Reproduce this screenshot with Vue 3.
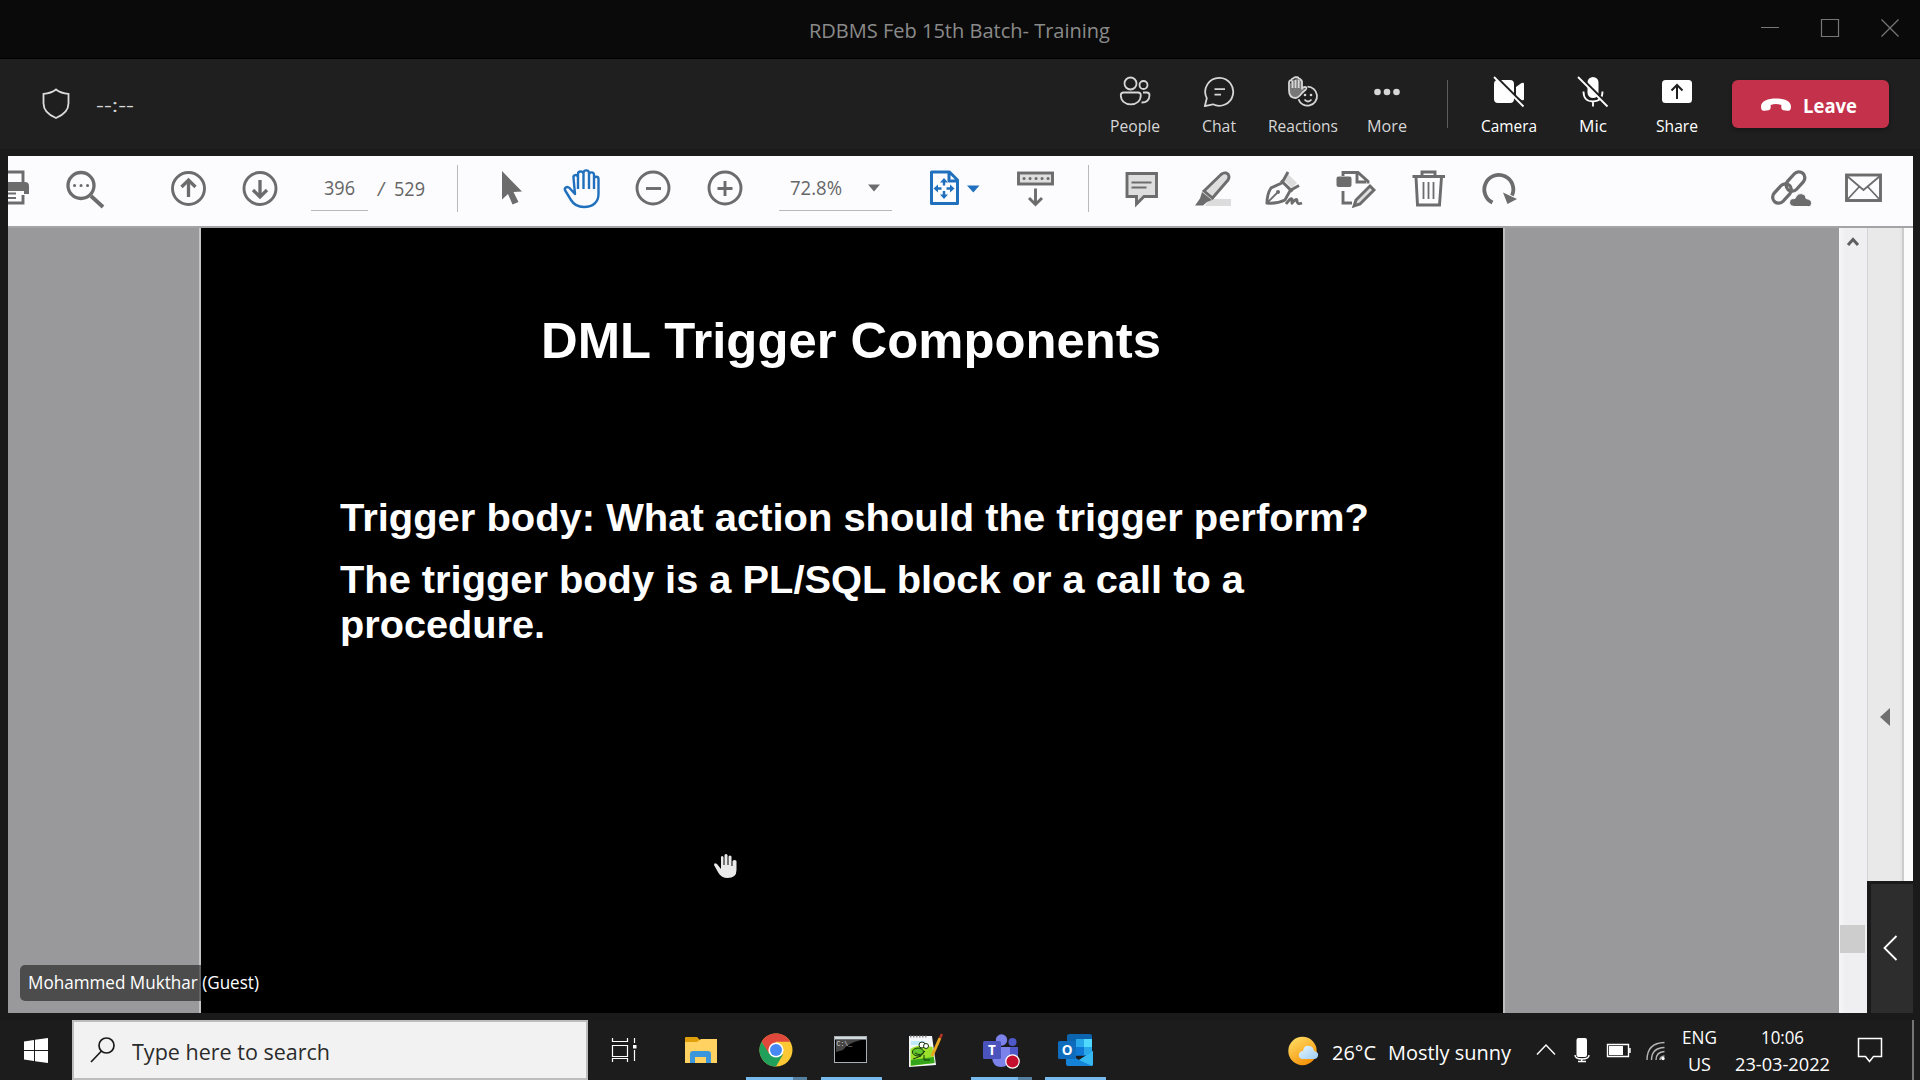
<script setup>
// Squeezes a label horizontally so that it occupies exactly the given width.
const vFit = {
  mounted(el, { value }) {
    const natural = el.getBoundingClientRect().width
    el.style.transform = `scaleX(${value / natural})`
    el.style.marginRight = `${value - natural}px`
  },
}

const callTools = [
  { id: 'people', label: 'People', width: 50 },
  { id: 'chat', label: 'Chat', width: 34 },
  { id: 'reactions', label: 'Reactions', width: 70 },
  { id: 'more', label: 'More', width: 40 },
]
const deviceTools = [
  { id: 'camera', label: 'Camera', width: 56 },
  { id: 'mic', label: 'Mic', width: 28 },
  { id: 'share', label: 'Share', width: 42 },
]
</script>

<template>
  <div class="desktop">
    <header class="titlebar">
      <span class="title"><span v-fit="301" class="fit">RDBMS Feb 15th Batch- Training</span></span>
      <svg class="window-controls" width="180" height="58" viewBox="1740 0 180 58">
        <path d="M1761 27.500h18M1821.500 19.500h17v17h-17zM1881.500 19.500l17 17M1898.500 19.500l-17 17" />
      </svg>
    </header>

    <section class="callbar">
      <svg class="shield" width="30" height="34" viewBox="0 0 30 34">
        <path d="M15 2.500c3.500 2.800 7.500 4 12.500 4.300v9.500c0 7-4.500 11.500-12.500 14.700C7 27.800 2.500 23.300 2.500 16.300V6.800C7.500 6.500 11.500 5.300 15 2.500z" />
      </svg>
      <span class="timer"><span v-fit="38" class="fit">--:--</span></span>

      <nav class="tools">
        <div v-for="t in callTools" :key="t.id" class="tool">
          <svg width="32" height="32" viewBox="0 0 32 32">
            <g v-if="t.id === 'people'" class="ln">
              <circle cx="11.500" cy="7.500" r="6" />
              <circle cx="24.500" cy="9" r="4" />
              <path d="M4.500 16.500h14.500q2.800 0 2.800 2.800c0 5.500-4 9-10 9s-10-3.500-10-9q0-2.800 2.700-2.800zM24 16.500h3.800q2.700 0 2.700 2.800c0 4.700-3 7.400-8 7.200" />
            </g>
            <g v-else-if="t.id === 'chat'" class="ln">
              <path d="M16.500 1.800a14 14 0 1 1-6.600 26.500L1.800 30.200l2-8A14 14 0 0 1 16.500 1.800zM11.500 13.200h10.500M11.500 18.700h6.500" />
            </g>
            <g v-else-if="t.id === 'reactions'">
              <path class="hand-fill" d="M3 7V16q0 5 4 6l5-2 7-6q-1-3-4 0V5q-1-2-2.500 0-.5-3-2.500-3T7.500 4Q4 3 4 7z" />
              <path class="ln" d="M2 6.500V14q0 8 6.500 8c3 0 5-3 7-5.500l3-2.700q2-2.300-.5-2.800-1.500 0-3 1.800V5.500q-.3-1.700-1.800-1.500M2 6.500q.3-2.500 2.500-2.200 0-2 2-1.900.8-1.800 2.800-1.200 2-.6 2.500 1.500 2 0 2.200 2M5.500 5v7M8.500 4v8M11.700 4v8" />
              <path class="ln" d="M20.500 10.700a9.500 9.500 0 1 1-9 12.500M17.500 23.500q3.500 4 7 0" />
              <circle cx="18" cy="19" r="1.300" class="sol" /><circle cx="24" cy="19" r="1.300" class="sol" />
            </g>
            <g v-else class="sol">
              <circle cx="6.500" cy="16" r="3.300" /><circle cx="16" cy="16" r="3.300" /><circle cx="25.500" cy="16" r="3.300" />
            </g>
          </svg>
          <span v-fit="t.width" class="fit">{{ t.label }}</span>
        </div>
      </nav>
      <i class="call-divider"></i>
      <nav class="tools on">
        <div v-for="t in deviceTools" :key="t.id" class="tool">
          <svg width="32" height="32" viewBox="0 0 32 32">
            <template v-if="t.id === 'camera'">
              <path class="sol" d="M5 4h12q4 0 4 4v15q0 4-4 4H5q-4 0-4-4V8q0-4 4-4zM23 11l5.500-4Q31 6 31 8v15q0 2-2.500 1L23 20z" />
              <path class="gap" d="M3 1l28 28" /><path class="ln" d="M1 1l29.500 29.500" />
            </template>
            <template v-else-if="t.id === 'mic'">
              <rect x="10.500" y="1" width="11" height="21" rx="5.500" class="sol" />
              <path class="ln" d="M6.500 15.500q0 10 9.500 10t9.500-10M16 25v5.500" />
              <path class="gap" d="M3 1l28 28" /><path class="ln" d="M1 1l29.500 29.500" />
            </template>
            <template v-else>
              <rect x="1" y="4" width="30" height="23" rx="3.500" class="sol" />
              <path class="cut" d="M16 23V9.500M10.500 14.500L16 9l5.500 5.500" />
            </template>
          </svg>
          <span v-fit="t.width" class="fit">{{ t.label }}</span>
        </div>
      </nav>
      <button class="leave">
        <svg width="30" height="14" viewBox="0 0 30 14"><path d="M0 8.500C0 3 7 .5 15 .5s15 2.500 15 8c0 3.500-1.200 4.700-3.500 4.300l-4-.6c-1.700-.3-2.300-1.500-2.200-3.200l.1-2q-5.400-2-10.800 0l.1 2c.1 1.700-.5 2.900-2.200 3.200l-4 .6C1.200 13.200 0 12 0 8.500z" /></svg>
        <span v-fit="54" class="fit">Leave</span>
      </button>
    </section>

    <main class="share">
      <div class="pdfbar">
        <svg width="40" height="70" viewBox="8 156 40 70">
          <path class="g" d="M8 172h15v10M8 203h15v-8" />
          <path class="gf" d="M8 182h17q4 0 4 4v8h-5v-3H8z" />
          <path class="g thin" d="M8 193.500h8M8 198h8" />
        </svg>
        <svg width="102" height="70" viewBox="48 156 102 70">
          <circle cx="81" cy="185.500" r="13" class="g heavy" /><path class="g thick" d="M91 196l12 11" />
          <path class="dots" d="M74.500 185.500h.1M81 185.500h.1M87.500 185.500h.1" />
        </svg>
        <svg width="74" height="70" viewBox="150 156 74 70">
          <circle cx="188.500" cy="188.500" r="16" class="g" /><path class="g heavy" d="M188.500 197v-16M181.500 187l7-7 7 7" />
        </svg>
        <svg width="76" height="70" viewBox="224 156 76 70">
          <circle cx="260" cy="188.500" r="16" class="g" /><path class="g heavy" d="M260 180v16M253 190l7 7 7-7" />
        </svg>
        <div class="pages">
          <span class="field page"><span v-fit="31" class="fit">396</span></span>
          <span class="slash">/</span>
          <span v-fit="31" class="fit">529</span>
        </div>
        <i class="bar-divider first"></i>
        <svg width="65" height="70" viewBox="480 156 65 70">
          <path class="gf" d="M502 171l20 20.500-8.500.5 5 10-6 2.500-4.500-10.500-6 5.500z" />
        </svg>
        <svg width="75" height="70" viewBox="545 156 75 70">
          <path class="b" d="M575 194l-5.500-6c-2.500-2.500-6 0-4 3l5.500 9c3 5 7 7 13 7 9 0 14.500-5 14.500-13v-15c0-3-4.500-3-4.500 0v-4c0-3.500-5-3.500-5 0v-2c0-3.500-5.500-3.500-5.500 0v1c0-3.500-5.500-3-5.500 0v3c-1-3-5-2.500-4.500 1zM578 176v13M583.500 173v16M589 174v15M594 178v11" />
        </svg>
        <svg width="70" height="70" viewBox="620 156 70 70">
          <circle cx="653" cy="188" r="16" class="g" /><path class="g" d="M646 188.500h15" />
        </svg>
        <svg width="75" height="70" viewBox="690 156 75 70">
          <circle cx="725" cy="188" r="16" class="g" /><path class="g" d="M717.500 188.500h15M725 181v15" />
        </svg>
        <div class="zoom-level">
          <span class="field zoomed"><span v-fit="52" class="fit">72.8%</span>
            <svg width="12" height="8" viewBox="0 0 12 8"><path class="gf" d="M0 .5h12L6 7.500z" /></svg>
          </span>
        </div>
        <svg width="90" height="70" viewBox="910 156 90 70">
          <path class="b heavy" d="M931.500 172h18l8 8v23.500h-26zM949 172v9h9" />
          <path class="b" d="M944 180.500v5M944 191v5M936.500 188.500h5M946.500 188.500h5" />
          <path class="bf" d="M944 178l4 4.500h-8zM944 199l4-4.500h-8zM933.500 188.500l4.500-4v8zM954.500 188.500l-4.500-4v8zM967 185.500h12.500l-6.200 7z" />
        </svg>
        <svg width="70" height="70" viewBox="1000 156 70 70">
          <rect x="1018.500" y="173" width="34" height="11" class="g fillg" />
          <path class="dots" d="M1024 178.500h.1M1030 178.500h.1M1036 178.500h.1M1042 178.500h.1M1048 178.500h.1" />
          <path class="g" d="M1035.500 188.500v15M1029 198l6.500 6.500 6.500-6.500" />
        </svg>
        <i class="bar-divider second"></i>
        <svg width="70" height="70" viewBox="1110 156 70 70">
          <path class="g fillg" d="M1127 173.500h29.500v23h-12.500l-7.500 7.500v-7.500h-9.500z" /><path class="g thin" d="M1131.500 182.500h20M1131.500 187.500h15" />
        </svg>
        <svg width="70" height="70" viewBox="1180 156 70 70">
          <path class="shade" d="M1209 199h22v7h-26z" />
          <path class="g fillg" d="M1204 191l17-16.500q2.500-2 5-1.500l2 1q2 3 0 6l-15.500 18z" />
          <path class="gf" d="M1202 192l10 8-5 2-4 3.500h-8l5-7z" />
        </svg>
        <svg width="70" height="70" viewBox="1250 156 70 70">
          <path class="shade" d="M1288 174l9 9-5 5-8-8z" />
          <path class="g" d="M1267 203q0-9 4-15l12-5.500 7.500 7.500-5.500 10q-8 4-18 3zM1281 180.500l11.500 11M1283 181l5-9M1291 190l8-4.500" />
          <path class="g thin" d="M1268 202l9-9" />
          <circle cx="1278" cy="192" r="2" class="gf" />
          <path class="g" d="M1286 204q6-8 6-4t0 3q5-6 5-2t5 2" />
        </svg>
        <svg width="70" height="70" viewBox="1320 156 70 70">
          <path class="g" d="M1343 176v-3.500h15l10 9v2M1357 173v9h9M1343 191v12h9" />
          <rect x="1336.500" y="176.500" width="15" height="10.500" rx="2" class="gf" />
          <path class="g fillg" d="M1354 206l2-6 14-14 4 4-14 14z" />
        </svg>
        <svg width="75" height="70" viewBox="1390 156 75 70">
          <path class="g" d="M1412.500 176.500h32.500M1422 176v-4h13v4M1416 177l1.500 28h22l2-28" /><path class="g thin" d="M1423.500 182v17M1428.500 182v17M1433.500 182v17" />
        </svg>
        <svg width="75" height="70" viewBox="1465 156 75 70">
          <path class="g thick" d="M1492.500 202.500a14.500 14.500 0 1 1 19.500-7" /><path class="gf" d="M1503 192.500l14 6.500-9.500 5z" />
        </svg>
        <span class="grow"></span>
        <svg width="75" height="70" viewBox="1755 156 75 70">
          <g class="g heavy">
            <rect x="-11" y="-6" width="22" height="12" rx="6" transform="translate(1795.500 181.500) rotate(-48)" />
            <rect x="-11" y="-6" width="22" height="12" rx="6" transform="translate(1782 193.500) rotate(-48)" />
          </g>
          <path class="cloud" d="M1794 206.500q-6-1-4-6 1-2.500 5-2 3-7 9-4 2 1 2 4 6 1 5.500 5t-4.500 3z" />
        </svg>
        <svg width="83" height="70" viewBox="1830 156 83 70">
          <rect x="1846.500" y="175" width="34" height="25.500" class="g" /><path class="g thin" d="M1847 176l16.500 14 16.500-14M1847 200l12-13M1880 200l-12-13" />
        </svg>
      </div>

      <div class="viewer">
        <div class="margin left"></div>
        <article class="slide">
          <h1><span v-fit="620" class="fit">DML Trigger Components</span></h1>
          <p><span v-fit="1029" class="fit">Trigger body: What action should the trigger perform?</span></p>
          <p class="next"><span v-fit="904" class="fit">The trigger body is a PL/SQL block or a call to a</span></p>
          <p><span v-fit="205" class="fit">procedure.</span></p>
          <svg class="grab" width="24" height="26" viewBox="0 0 24 26"><path d="M7 16V4q1-2 2.500 0v8h1V2q1.500-2 3 0v10h1V3.500q1.500-2 3 0V13h1V8q2-2 4 0v9q0 8-9 8-6 0-9-5L0 12q0-3 3-1z" /></svg>
        </article>
        <div class="margin right"></div>
        <div class="scrollbar">
          <svg width="14" height="10" viewBox="0 0 14 10"><path d="M2 8l5-5.500L12 8" /></svg>
          <i class="thumb"></i>
        </div>
        <aside class="side">
          <div class="panel"><svg width="10" height="18" viewBox="0 0 10 18"><path d="M10 0v18L0 9z" /></svg></div>
          <button class="expand"><svg width="15" height="26" viewBox="0 0 15 26"><path d="M13.500 1L1.500 13l12 12" /></svg></button>
        </aside>
      </div>
      <div class="nametag"><span v-fit="231" class="fit">Mohammed Mukthar (Guest)</span></div>
    </main>

    <footer class="taskbar">
      <div class="start">
        <svg width="24" height="25" viewBox="0 0 24 25"><path d="M0 3.500l10-1.500v10H0zM11 1.800L24 0v12H11zM0 13h10v10L0 21.500zM11 13h13v12l-13-1.800z" /></svg>
      </div>
      <div class="search">
        <svg width="25" height="26" viewBox="0 0 25 26"><circle cx="16.500" cy="8.500" r="7.500" /><path d="M11.500 14L1 25" /></svg>
        <span v-fit="198" class="fit">Type here to search</span>
      </div>
      <svg class="taskview" width="72" height="60" viewBox="588 1020 72 60">
        <path d="M612.500 1038v3.500h15v-3.500M612.500 1045.500h15v11h-15zM612.500 1062v-3.500h15v3.500M634.500 1038v5M634.500 1050v11" /><path class="fillw" d="M633 1045h3.500v3.500H633z" />
      </svg>
      <div class="app">
        <svg width="75" height="60" viewBox="664 1020 75 60">
          <path fill="#e0a00c" d="M685 1038q0-1 1-1h11l3 3v6h-15z" /><path fill="#ffd262" d="M685 1042h12l4-3h16v24h-32z" />
          <path fill="#3b96dc" d="M690 1054q0-3 3-3h15q3 0 3 3v9h-5v-6h-11v6h-5z" />
        </svg>
      </div>
      <div class="app">
        <svg width="75" height="60" viewBox="739 1020 75 60">
          <circle cx="776" cy="1050" r="16.500" fill="#fcc934" />
          <path fill="#e0483c" d="M761.700 1041.700A16.500 16.500 0 0 1 790.300 1041.700H776l-8 12z" />
          <path fill="#20a05a" d="M761.700 1041.700A16.500 16.500 0 0 0 776 1066.500l7-12-14-1z" />
          <circle cx="776" cy="1050" r="7.600" fill="#fff" /><circle cx="776" cy="1050" r="6" fill="#4688f4" />
        </svg>
        <i class="running"></i><i class="stacked"></i>
      </div>
      <div class="app">
        <svg width="75" height="60" viewBox="814 1020 75 60">
          <rect x="834.500" y="1036.500" width="32" height="26" fill="#000" stroke="#a9b0b5" /><path fill="#d3dade" d="M835 1037h31v2.500h-31z" />
          <path fill="#454545" d="M836 1040h25q-13 3-18 10l-7 2z" />
          <text x="836.500" y="1046" class="prompt">C:\_</text>
        </svg>
        <i class="running full"></i>
      </div>
      <div class="app">
        <svg width="75" height="60" viewBox="888 1020 75 60">
          <path fill="#f3f7fa" d="M909 1036h23l4 29-27 2z" /><path stroke="#888" stroke-width="2" stroke-dasharray="1.500 1.500" d="M910 1036.500h17" />
          <path fill="#9be02b" d="M910.500 1049q8-6 22-2l2 16-24 3z" /><path fill="#34a51a" d="M911 1060l23-3 .5 6-23.500 2.500z" />
          <path fill="#bfe9ff" d="M911 1041h14v4h-14z" />
          <g fill="#62c62c" stroke="#17350c"><ellipse cx="918" cy="1052" rx="5.500" ry="4" /><circle cx="922" cy="1045" r="3" fill="#fff" /><circle cx="926" cy="1046" r="2.500" fill="#fff" /><path fill="none" d="M915 1053q6 4 10-2M913 1059l8-3M924 1055v5h6" /></g>
          <path stroke="#e7a520" stroke-width="3" d="M932 1056l8-18" /><path stroke="#b63326" stroke-width="2.500" d="M940 1038l2-4" />
        </svg>
      </div>
      <div class="app">
        <svg width="75" height="60" viewBox="963 1020 75 60">
          <circle cx="1012.500" cy="1042" r="4" fill="#5059c9" /><path fill="#5059c9" d="M1006 1047h12v10q-1 8-9 8z" />
          <circle cx="1001.500" cy="1040" r="5.700" fill="#7b83eb" /><path fill="#7b83eb" d="M992 1047h18v11q-1 9-9 9t-9-9z" />
          <rect x="983" y="1041" width="18" height="18" rx="1.500" fill="#4b53bc" />
          <text x="992" y="1055" class="glyph">T</text>
          <circle cx="1012.500" cy="1061.500" r="6.700" fill="#c50f2e" stroke="#fff" stroke-width="1.200" />
        </svg>
        <i class="running"></i><i class="stacked"></i>
      </div>
      <div class="app">
        <svg width="75" height="60" viewBox="1038 1020 75 60">
          <path fill="#0b64ad" d="M1070 1034h20q2 0 2 2v20h-25v-20q0-2 3-2z" /><path fill="#28a8ea" d="M1076 1039h8v8h-8z" /><path fill="#50d9ff" d="M1084 1039h8v8h-8z" /><path fill="#0f78d4" d="M1076 1047h8v8h-8z" /><path fill="#28a8ea" d="M1084 1047h8v8h-8z" />
          <path fill="#1583d8" d="M1066 1052l13 8 14-9v13q0 2-2 2h-23q-2 0-2-2z" /><path fill="#35b8f1" d="M1079 1060l14-9v13q0 1-1 2z" />
          <rect x="1058" y="1041" width="18" height="18" rx="1.500" fill="#0f6cbd" />
          <text x="1067" y="1055" class="glyph">O</text>
        </svg>
        <i class="running full"></i>
      </div>
      <span class="grow"></span>
      <div class="weather">
        <svg width="31" height="30" viewBox="0 0 31 30">
          <defs><linearGradient id="sun" x1="0" y1="0" x2=".6" y2="1"><stop offset="0" stop-color="#ffe36b" /><stop offset="1" stop-color="#f7930a" /></linearGradient><linearGradient id="cloud" x1="0" y1="0" x2="1" y2="1"><stop offset="0" stop-color="#e8f6ff" /><stop offset="1" stop-color="#9ccdf3" /></linearGradient></defs>
          <circle cx="14.500" cy="15" r="14.200" fill="url(#sun)" /><path fill="url(#cloud)" d="M14 23q-4-1-3-5 1-3 4-3 1-6 6-5 4 0 5 5 5 1 4 5-1 3-4 3z" />
        </svg>
        <span v-fit="44" class="fit">26°C</span>
        <span v-fit="123" class="fit">Mostly sunny</span>
      </div>
      <svg class="tray" width="150" height="60" viewBox="1525 1020 150 60">
        <path d="M1537 1054.500l9-9.500 9 9.500" />
        <rect x="1576.500" y="1038" width="10.500" height="19" rx="2" class="fillw" /><path d="M1575 1055q0 4 7 4t7-4M1581.700 1059v2.500M1578 1061.500h8" />
        <path d="M1607.500 1044.500h21v12h-21zM1630 1048v5" /><path class="fillw" d="M1609 1046h14v9h-14z" />
        <path class="faint" d="M1647 1060q0-17 17.500-17.500M1651.500 1060q0-12 13-12.500M1656 1060q0-8 8.500-8.500M1660 1060q0-3.500 4.500-4" /><circle cx="1663" cy="1058.500" r="1.700" class="fillw" />
      </svg>
      <div class="stack lang"><span v-fit="35" class="fit">ENG</span><span v-fit="23" class="fit">US</span></div>
      <div class="stack clock"><span v-fit="43" class="fit">10:06</span><span v-fit="95" class="fit">23-03-2022</span></div>
      <svg class="notify" width="72" height="60" viewBox="1840 1020 72 60"><path d="M1858.500 1038.500h23v18h-8l-4 5-4-5h-7z" /></svg>
      <i class="peek"></i>
    </footer>
  </div>
</template>

<style>
body { background: #1a1a1a; overflow: hidden; }
</style>

<style scoped>
* { box-sizing: border-box; }
.desktop { width: 1920px; height: 1080px; display: flex; flex-direction: column; background: #1a1a1a; font-family: "Open Sans", "Noto Sans", sans-serif; overflow: hidden; }
.fit { display: inline-block; white-space: nowrap; transform-origin: 0 50%; flex: none; }
svg { display: block; flex: none; fill: none; }
.grow { flex: 1; }

.titlebar { height: 59px; background: #0a0a0a; border-bottom: 1px solid #000; display: flex; align-items: center; }
.title { margin-left: 809px; flex: 1; color: #8a8a8a; font-size: 20px; line-height: 28px; padding-top: 3px; }
.window-controls path { stroke: #777; stroke-width: 1.2; }

.callbar { height: 90px; background: #1f1f1f; display: flex; align-items: center; color: #d6d6d6; }
.shield { margin-left: 41px; margin-right: 25px; stroke: #dcdcdc; stroke-width: 1.8; }
.timer { font-size: 19px; width: 997px; line-height: 26px; padding-top: 2px; }
.tools { display: flex; }
.tool { width: 84px; height: 90px; display: flex; flex-direction: column; align-items: center; padding-top: 17px; font-size: 17px; line-height: 24px; gap: 6px; }
.tool .ln { fill: none; stroke: #d6d6d6; stroke-width: 1.8; stroke-linejoin: round; }
.tool .sol { fill: #d6d6d6; }
.tool .hand-fill { fill: #777; }
.on { color: #fff; }
.on .tool .ln { stroke: #fff; }
.on .tool .sol { fill: #fff; }
.tool .gap { stroke: #1f1f1f; stroke-width: 3; }
.tool .cut { stroke: #1f1f1f; stroke-width: 2; }
.call-divider { width: 1px; height: 48px; background: #5c5c5c; margin: 0 19px 0 18px; }
.leave { margin-left: 13px; width: 157px; height: 48px; border: 0; border-radius: 6px; background: #c4314b; color: #fff; font: 700 20px/28px "Open Sans", sans-serif; display: flex; align-items: center; padding: 2px 0 0 29px; gap: 12px; box-shadow: 0 2px 4px rgba(0, 0, 0, .3); }
.leave svg { fill: #fff; margin-bottom: 1px; }
.leave .fit { padding-top: 1px; }

.share { position: relative; margin: 7px 7px 0 8px; height: 857px; display: flex; flex-direction: column; }
.pdfbar { height: 72px; background: #fcfcfe; border-bottom: 2px solid #a4a4a6; display: flex; color: #666; font-size: 19.5px; }
.g { stroke: #6c6c6c; stroke-width: 2.9; fill: none; }
.g.thin { stroke-width: 1.8; }
.g.thick { stroke-width: 3.8; }
.g.heavy { stroke-width: 3.3; }
.g.fillg { fill: #dedede; }
.gf { fill: #6c6c6c; }
.shade { fill: #dcdcdc; }
.cloud { fill: #6c6c6c; stroke: #fcfcfe; stroke-width: 1; }
.dots { stroke: #6c6c6c; stroke-width: 3; stroke-linecap: round; }
.b { stroke: #2070bd; stroke-width: 2.4; stroke-linejoin: round; }
.b.heavy { stroke-width: 3; }
.bf { fill: #2070bd; }
.pages { width: 140px; display: flex; align-items: center; padding: 0 0 7px 11px; }
.field { border-bottom: 1.500px solid #b8b8b8; display: flex; align-items: center; }
.page { width: 57px; height: 45px; justify-content: center; align-self: flex-start; margin-top: 10px; }
.pages > .slash { width: 27px; text-align: center; margin-right: -1px; padding-top: 2px; transform: skewX(-8deg); }
.pages > .fit { padding-top: 2px; }
.bar-divider { width: 1px; height: 47px; background: #b9b9bb; margin-top: 9px; }
.first { margin-left: 17px; margin-right: 22px; }
.second { margin-left: 18px; margin-right: 21px; }
.zoom-level { width: 145px; padding: 10px 0 0 14px; }
.zoomed { width: 113px; height: 45px; padding: 0 0 0 11px; gap: 26px; }
.field .fit { margin-top: -2px; }

.viewer { flex: 1; display: flex; min-height: 0; }
.margin { background: #99999b; }
.margin.left { width: 193px; border-right: 2px solid #c4c4c4; }
.margin.right { width: 336px; border-left: 2px solid #bdbdbd; }
.slide { position: relative; width: 1302px; background: #000; color: #fff; font-family: "Liberation Sans", Arial, sans-serif; font-weight: 700; padding: 83px 0 0 139px; }
.slide h1 { margin: 0 0 124px 201px; font-size: 50px; line-height: 60px; }
.slide p { margin: 0; font-size: 38.6px; line-height: 45px; height: 45px; }
.slide p.next { margin-top: 17px; }
.grab { position: absolute; left: 513px; top: 625px; fill: #e9e9e9; }
.scrollbar { width: 28px; background: linear-gradient(90deg, #f6f6f6, #efeef1 6px); display: flex; flex-direction: column; align-items: center; padding: 9px 1px 0 0; }
.scrollbar svg { stroke: #5e5e5e; stroke-width: 3; }
.thumb { width: 25px; height: 28px; margin-top: 678px; background: #cdcdcd; }
.side { width: 46px; display: flex; flex-direction: column; }
.panel { height: 653px; border-left: 1px solid #d4d4d6; background: linear-gradient(90deg, #e9e9e9 31px, #e2e2e2 34px, #ccc 34px, #ccc 36px, #fbfbfb 36px); padding: 480px 0 0 12px; }
.panel svg { fill: #6f6f6f; }
.expand { flex: 1; margin-left: 1px; border: solid #1a1a1a; border-width: 3px 0 0 3px; background: #2d2d2d; padding: 0 0 2px 12px; display: flex; align-items: center; }
.expand svg { stroke: #fff; stroke-width: 1.8; }
.nametag { position: absolute; left: 12px; top: 809px; width: 247px; height: 36px; border-radius: 5px; background: rgba(0, 0, 0, .5); color: #fff; font-size: 17.500px; line-height: 34px; padding-left: 8px; }

.taskbar { margin-top: 7px; height: 60px; background: #1c1c1c; display: flex; color: #fff; }
.start { width: 72px; padding: 18px 0 0 24px; }
.start svg { fill: #fff; }
.search { width: 516px; border: 2px solid #bdbdbd; background: #f2f2f2; color: #2b2b2b; display: flex; align-items: center; padding-left: 16px; gap: 17px; font-size: 21px; line-height: 28px; }
.search svg { stroke: #1b1b1b; stroke-width: 1.7; margin-bottom: 1px; }
.search .fit { padding-top: 4px; }
.taskview { margin-right: 4px; stroke: #fff; stroke-width: 1.2; }
.fillw { fill: #fff; stroke: none; }
.app { position: relative; width: 74.8px; height: 60px; }
.running, .stacked { position: absolute; bottom: 0; height: 3px; background: #76b9ed; }
.running { left: 7.500px; width: 47px; }
.running.full { width: 61px; }
.stacked { left: 54.500px; width: 14px; background: #55809f; }
.prompt { font: 6.500px "Liberation Mono", monospace; fill: #ddd; }
.glyph { font: 700 13.500px "Open Sans", sans-serif; fill: #fff; text-anchor: middle; }
.weather { display: flex; align-items: center; font-size: 20.500px; line-height: 28px; gap: 13px; width: 237px; }
.weather .fit { padding-top: 3px; }
.weather .fit:last-child { margin-left: -1px; }
.weather svg { margin-top: 1px; }
.tray { stroke: #fff; stroke-width: 1.4; }
.tray .fillw { stroke: none; }
.tray .faint { stroke: #b5b5b5; }
.stack { display: flex; flex-direction: column; align-items: center; font-size: 17.500px; line-height: 27px; padding-top: 4px; }
.lang { width: 48px; }
.clock { width: 117px; padding-left: 2px; }
.notify { stroke: #fff; stroke-width: 1.500; }
.peek { width: 2px; background: #757575; margin-right: 6px; }
</style>
